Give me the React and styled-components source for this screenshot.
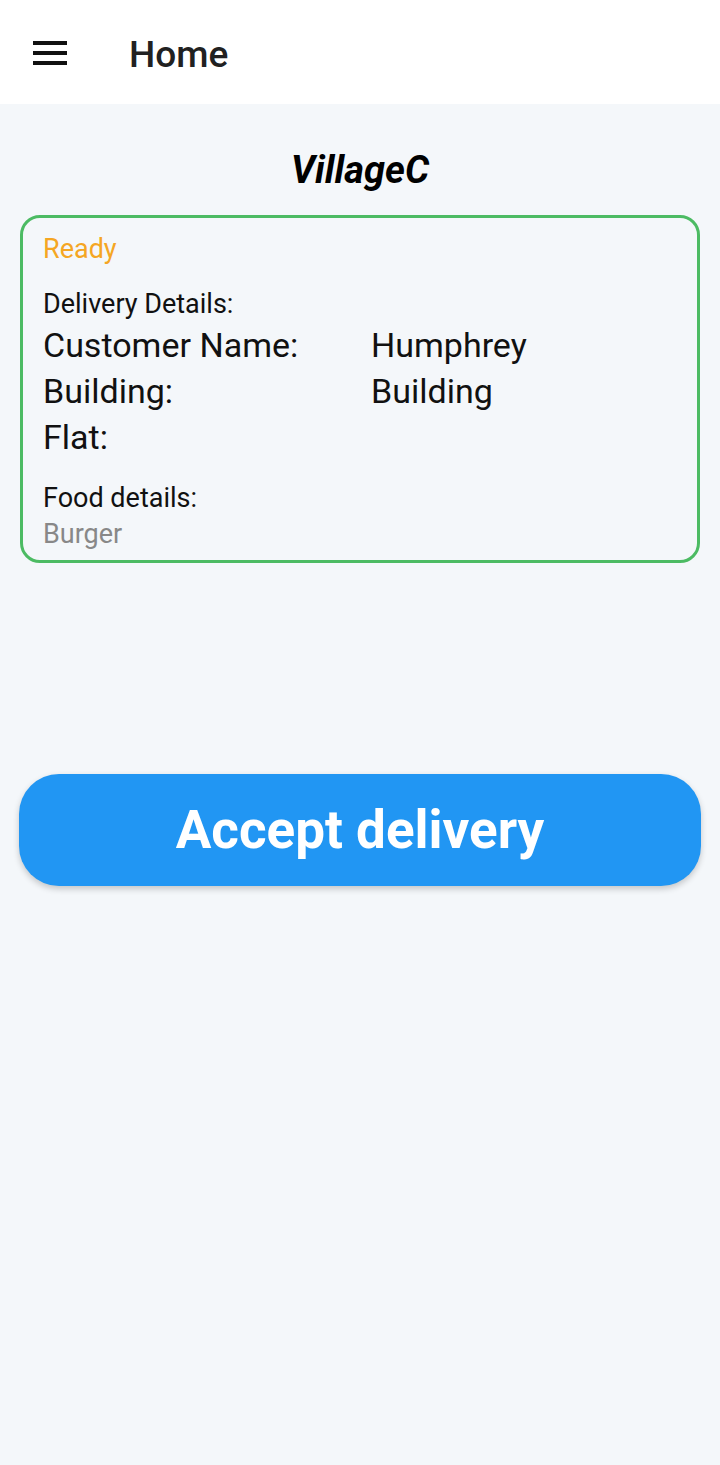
import styled, { createGlobalStyle } from "styled-components";

const GlobalStyle = createGlobalStyle`
  body {
    margin: 0;
    background: #f4f7fa;
    font-family: Roboto, "Liberation Sans", sans-serif;
  }
`;

const Page = styled.div`
  min-height: 1465px;
  background: #f4f7fa;
`;

const TopBar = styled.header`
  display: flex;
  align-items: center;
  height: 104px;
  background: #ffffff;
  padding-left: 33px;
  padding-top: 4px;
  box-sizing: border-box;
`;

const MenuButton = styled.div`
  display: flex;
  flex-direction: column;
  justify-content: space-between;
  width: 34px;
  height: 24px;
  margin-right: 62px;
  margin-top: -2px;
  span {
    display: block;
    height: 4px;
    background: #111;
  }
`;

const Title = styled.h1`
  margin: 0;
  font-size: 37px;
  font-weight: 500;
  color: #212121;
`;

const Content = styled.main`
  padding: 0 19px;
`;

const Village = styled.h2`
  margin: 0;
  padding-top: 44px;
  height: 67px;
  text-align: center;
  font-size: 38px;
  font-weight: 700;
  font-style: italic;
  color: #000;
`;

const Card = styled.section`
  margin: 0 1px;
  border: 3px solid #4cbb63;
  border-radius: 20px;
  padding: 14px 20px 12px;
  height: 348px;
  box-sizing: border-box;
`;

const Status = styled.div`
  font-size: 27px;
  color: #f5a623;
  line-height: 34px;
`;

const Label = styled.div`
  font-size: 27px;
  color: #111;
  line-height: 36px;
  margin-top: ${(p) => p.$gap || 0}px;
`;

const Grid = styled.div`
  display: grid;
  grid-template-columns: 328px 1fr;
  font-size: 34px;
  line-height: 46px;
  color: #111;
`;

const Muted = styled.div`
  font-size: 27px;
  color: #888;
  line-height: 37px;
`;

const AcceptButton = styled.button`
  display: block;
  width: 100%;
  height: 112px;
  margin-top: 211px;
  border: none;
  border-radius: 40px;
  background: #2196f3;
  color: #fff;
  font-family: Roboto, "Liberation Sans", sans-serif;
  font-size: 53px;
  font-weight: 700;
  box-shadow: 0 3px 6px rgba(0, 0, 0, 0.2);
`;

export default function App() {
  return (
    <>
      <GlobalStyle />
      <Page>
        <TopBar>
          <MenuButton>
            <span />
            <span />
            <span />
          </MenuButton>
          <Title>Home</Title>
        </TopBar>
        <Content>
          <Village>VillageC</Village>
          <Card>
            <Status>Ready</Status>
            <Label $gap={20}>Delivery Details:</Label>
            <Grid>
              <div>Customer Name:</div>
              <div>Humphrey</div>
              <div>Building:</div>
              <div>Building</div>
              <div>Flat:</div>
              <div></div>
            </Grid>
            <Label $gap={20}>Food details:</Label>
            <Muted>Burger</Muted>
          </Card>
          <AcceptButton>Accept delivery</AcceptButton>
        </Content>
      </Page>
    </>
  );
}
